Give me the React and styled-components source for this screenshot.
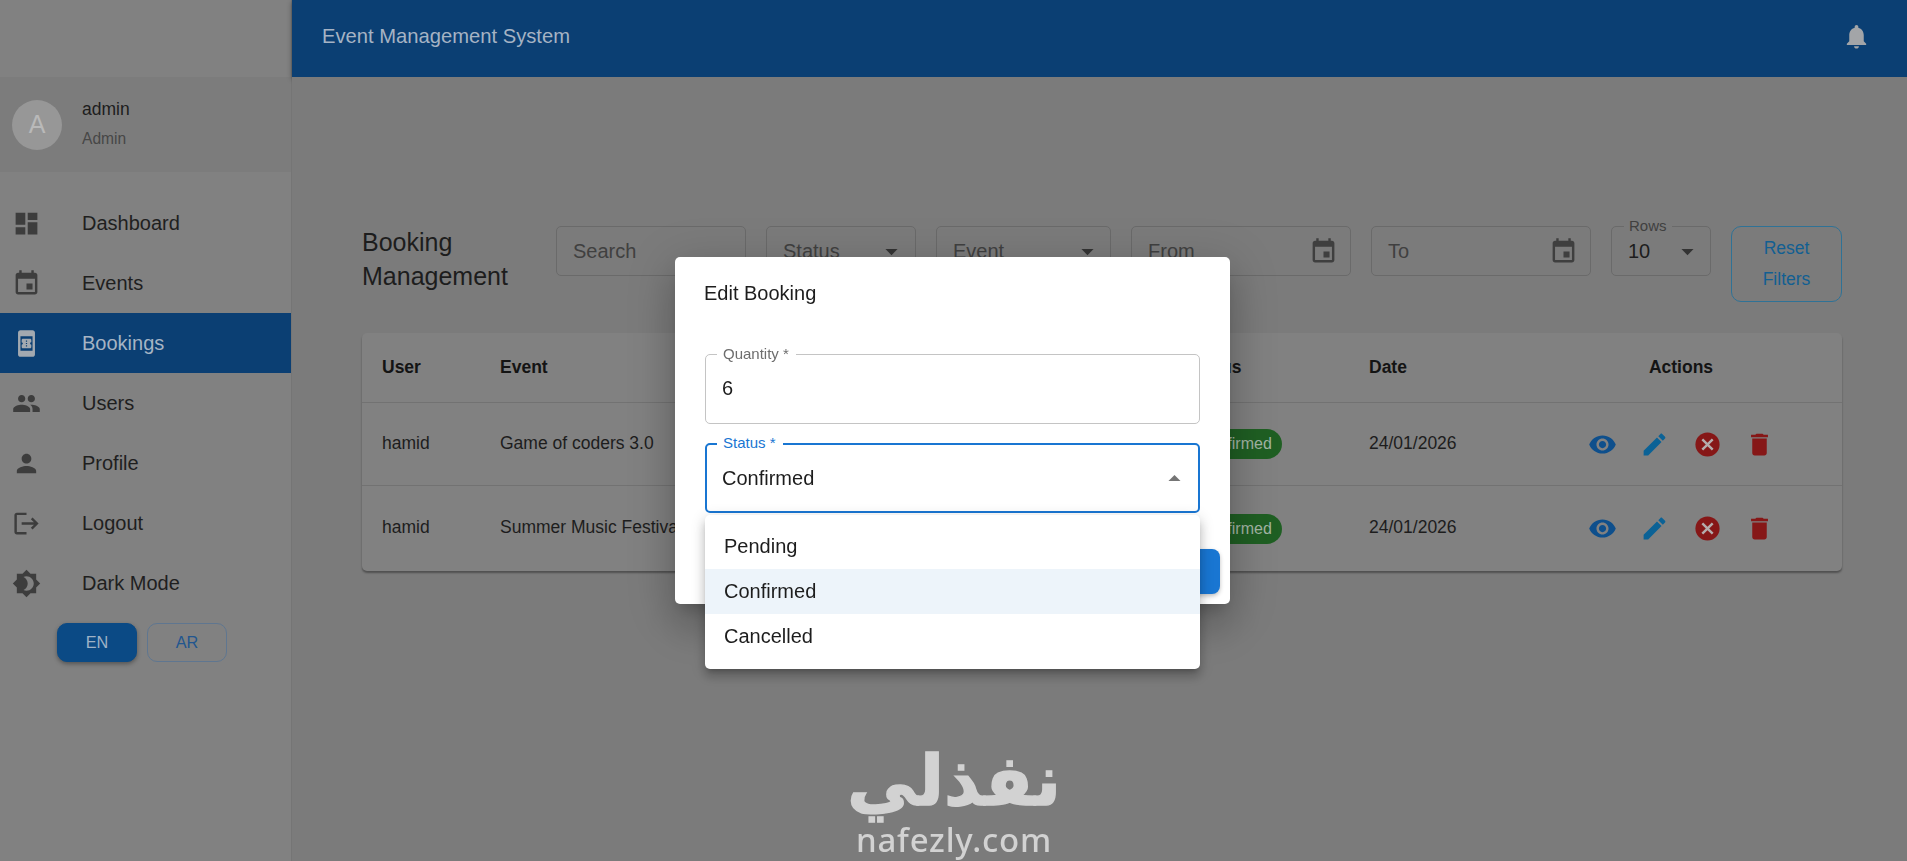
import React from "react";
import styled, { createGlobalStyle } from "styled-components";

const P = {
  dashboard: "M3 13h8V3H3zm0 8h8v-6H3zm10 0h8V11h-8zm0-18v6h8V3z",
  event: "M17 12h-5v5h5v-5zM16 1v2H8V1H6v2H5c-1.11 0-1.99.9-1.99 2L3 19c0 1.1.89 2 2 2h14c1.1 0 2-.9 2-2V5c0-1.1-.9-2-2-2h-1V1h-2zm3 18H5V8h14v11z",
  book: "M17 1.01 7 1c-1.1 0-2 .9-2 2v18c0 1.1.9 2 2 2h10c1.1 0 2-.9 2-2V3c0-1.1-.9-1.99-2-1.99zM17 18H7V6h10v12zm-1-7V9.14C16 8.51 15.55 8 15 8H9c-.55 0-1 .51-1 1.14v1.96c.55 0 1 .45 1 1s-.45 1-1 1v1.76C8 15.49 8.45 16 9 16h6c.55 0 1-.51 1-1.14V13c-.55 0-1-.45-1-1s.45-1 1-1zm-3.5 3.5h-1v-1h1v1zm0-2h-1v-1h1v1zm0-2h-1v-1h1v1z",
  people: "M16 11c1.66 0 2.99-1.34 2.99-3S17.66 5 16 5c-1.66 0-3 1.34-3 3s1.34 3 3 3zm-8 0c1.66 0 2.99-1.34 2.99-3S9.66 5 8 5C6.34 5 5 6.34 5 8s1.34 3 3 3zm0 2c-2.33 0-7 1.17-7 3.5V19h14v-2.5c0-2.33-4.67-3.5-7-3.5zm8 0c-.29 0-.62.02-.97.05 1.16.84 1.97 1.97 1.97 3.45V19h6v-2.5c0-2.33-4.67-3.5-7-3.5z",
  person: "M12 12c2.21 0 4-1.79 4-4s-1.79-4-4-4-4 1.79-4 4 1.79 4 4 4zm0 2c-2.67 0-8 1.34-8 4v2h16v-2c0-2.66-5.33-4-8-4z",
  logout: "M17 7l-1.41 1.41L18.17 11H8v2h10.17l-2.58 2.58L17 17l5-5zM4 5h8V3H4c-1.1 0-2 .9-2 2v14c0 1.1.9 2 2 2h8v-2H4V5z",
  dark: "M20 8.69V4h-4.69L12 .69 8.69 4H4v4.69L.69 12 4 15.31V20h4.69L12 23.31 15.31 20H20v-4.69L23.31 12 20 8.69zM12 18c-.89 0-1.74-.2-2.5-.55C11.56 16.5 13 14.42 13 12s-1.44-4.5-3.5-5.45C10.26 6.2 11.11 6 12 6c3.31 0 6 2.69 6 6s-2.69 6-6 6z",
  bell: "M12 22c1.1 0 2-.9 2-2h-4c0 1.1.89 2 2 2zm6-6v-5c0-3.07-1.64-5.64-4.5-6.32V4c0-.83-.67-1.5-1.5-1.5s-1.5.67-1.5 1.5v.68C7.63 5.36 6 7.92 6 11v5l-2 2v1h16v-1l-2-2z",
  eye: "M12 4.5C7 4.5 2.73 7.61 1 12c1.73 4.39 6 7.5 11 7.5s9.27-3.11 11-7.5c-1.73-4.39-6-7.5-11-7.5zM12 17c-2.76 0-5-2.24-5-5s2.24-5 5-5 5 2.24 5 5-2.24 5-5 5zm0-8c-1.66 0-3 1.34-3 3s1.34 3 3 3 3-1.34 3-3-1.34-3-3-3z",
  edit: "M3 17.25V21h3.75L17.81 9.94l-3.75-3.75L3 17.25zM20.71 7.04c.39-.39.39-1.02 0-1.41l-2.34-2.34c-.39-.39-1.02-.39-1.41 0l-1.83 1.83 3.75 3.75 1.83-1.83z",
  del: "M6 19c0 1.1.9 2 2 2h8c1.1 0 2-.9 2-2V7H6v12zM19 4h-3.5l-1-1h-5l-1 1H5v2h14V4z",
  down: "M7 10l5 5 5-5z",
  up: "M7 14l5-5 5 5z",
};

const Global = createGlobalStyle`
  html, body { margin: 0; padding: 0; height: 100%; overflow: hidden; }
  body { font-family: "Liberation Sans", Arial, sans-serif; background: #7b7b7b; color: #1d1d1d; }
  * { box-sizing: border-box; }
`;

const Svg = styled.svg`
  width: ${(p) => p.$size || 29}px;
  height: ${(p) => p.$size || 29}px;
  fill: ${(p) => p.$color || "currentColor"};
  flex: none;
  display: block;
`;
const Icon = ({ d, size, color }) => (
  <Svg viewBox="0 0 24 24" $size={size} $color={color}>
    <path d={d} />
  </Svg>
);
const CancelGlyph = ({ color }) => (
  <Svg viewBox="0 0 24 24" $size={29} $color={color}>
    <circle cx="12" cy="12" r="10" />
    <path d="M17 15.59 15.59 17 12 13.41 8.41 17 7 15.59 10.59 12 7 8.41 8.41 7 12 10.59 15.59 7 17 8.41 13.41 12z" fill="#b4acac" />
  </Svg>
);

const Shell = styled.div`
  display: flex;
  width: 100%;
  height: 100vh;
  overflow: hidden;
`;
const Sidebar = styled.aside`
  width: 292px;
  flex: none;
  padding-top: 77px;
  background: #818181;
  border-right: 1px solid #757575;
`;
const UserBlock = styled.div`
  display: flex;
  align-items: center;
  gap: 20px;
  height: 95px;
  padding-left: 12px;
  background: #7c7c7c;
`;
const Avatar = styled.div`
  width: 50px;
  height: 50px;
  border-radius: 50%;
  background: #979797;
  color: #b9b9b9;
  font-size: 25px;
  display: flex;
  align-items: center;
  justify-content: center;
`;
const UserText = styled.div`
  display: flex;
  flex-direction: column;
  gap: 4px;
`;
const UserName = styled.div`
  font-size: 17.5px;
  line-height: 26px;
  margin-top: -2px;
  color: #1d1d1d;
`;
const UserRole = styled.div`
  font-size: 15.6px;
  line-height: 26px;
  color: #474747;
`;
const Nav = styled.nav`
  padding-top: 21px;
`;
const NavItem = styled.div`
  display: flex;
  align-items: center;
  gap: 41px;
  height: 60px;
  padding-left: 12px;
  font-size: 20px;
  color: ${(p) => (p.$active ? "#a6b4c4" : "#1f1f1f")};
  background: ${(p) => (p.$active ? "#0b3f73" : "transparent")};
  svg { fill: ${(p) => (p.$active ? "#a3a9b0" : "#3d3d3d")}; }
`;
const LangRow = styled.div`
  display: flex;
  gap: 10px;
  margin: 10px 0 0 57px;
`;
const LangButton = styled.div`
  width: 80px;
  height: 39px;
  border-radius: 10px;
  display: flex;
  align-items: center;
  justify-content: center;
  font-size: 16.25px;
  color: ${(p) => (p.$active ? "#9fb2c6" : "#22568f")};
  background: ${(p) => (p.$active ? "#0b4a85" : "transparent")};
  border: 1px solid ${(p) => (p.$active ? "#0b4a85" : "#5f7690")};
  box-shadow: ${(p) => (p.$active ? "0 2px 4px rgba(0,0,0,.35)" : "none")};
`;

const Column = styled.div`
  flex: 1;
  min-width: 0;
  display: flex;
  flex-direction: column;
`;
const AppBar = styled.header`
  height: 77px;
  flex: none;
  display: flex;
  align-items: center;
  justify-content: space-between;
  padding: 0 36px 5px 30px;
  background: #0b3f73;
  color: #a5b3c4;
  font-size: 20.2px;
  box-shadow: 0 2px 5px rgba(0,0,0,.4);
`;
const Main = styled.main`
  flex: 1;
  padding: 149px 65px 0 70px;
  background: #7b7b7b;
`;
const FilterBar = styled.div`
  display: flex;
  align-items: flex-start;
  gap: 20px;
`;
const PageTitle = styled.h1`
  width: 174px;
  margin: -1px 0 0;
  font-weight: 400;
  font-size: 25px;
  line-height: 34px;
  color: #1d1d1d;
`;
const Field = styled.div`
  position: relative;
  width: ${(p) => p.$w}px;
  height: 50px;
  flex: none;
  display: flex;
  align-items: center;
  justify-content: space-between;
  padding: 0 ${(p) => p.$pr || 18}px 0 16px;
  font-size: 20px;
  color: #404040;
  border: 1px solid #6a6a6a;
  border-radius: 5px;
`;
const Value = styled.span`
  color: #1d1d1d;
`;
const Legend = styled.span`
  position: absolute;
  top: -10px;
  left: 12px;
  padding: 0 5px;
  font-size: 15px;
  line-height: 18px;
  color: #404040;
  background: #7b7b7b;
`;
const ResetButton = styled.div`
  width: 111px;
  height: 76px;
  flex: none;
  display: flex;
  flex-direction: column;
  align-items: center;
  justify-content: center;
  font-size: 17.5px;
  line-height: 31px;
  color: #125f92;
  border: 1px solid #2f7296;
  border-radius: 10px;
`;
const Card = styled.section`
  margin-top: 31px;
  background: #818181;
  border-radius: 5px;
  box-shadow: 0 2px 2px rgba(0,0,0,.35);
  overflow: hidden;
`;
const Row = styled.div`
  display: grid;
  grid-template-columns: 118px 1fr 181px 171px 282px;
  align-items: center;
  height: ${(p) => p.$h}px;
  padding: 0 20px;
  font-size: 17.5px;
  font-weight: ${(p) => (p.$head ? 700 : 400)};
  color: ${(p) => (p.$head ? "#141414" : "#1d1d1d")};
  border-bottom: ${(p) => (p.$last ? "none" : "1px solid #727272")};
`;
const Cell = styled.div`
  margin-bottom: 2px;
`;
const ActionHead = styled.div`
  text-align: center;
`;
const Chip = styled.span`
  display: inline-flex;
  align-items: center;
  height: 30px;
  padding: 0 10px;
  border-radius: 15px;
  font-size: 16px;
  color: #a3b5a4;
  background: #1f5f23;
  justify-self: start;
`;
const Actions = styled.div`
  display: flex;
  justify-content: center;
  gap: 23.5px;
`;

const Overlay = styled.div`
  position: fixed;
  inset: 0;
  padding-right: 2px;
  display: flex;
  align-items: center;
  justify-content: center;
`;
const Dialog = styled.div`
  position: relative;
  width: 555px;
  height: 347px;
  padding: 20px 30px 10px;
  background: #fff;
  border-radius: 5px;
  box-shadow: 0 11px 15px -7px rgba(0,0,0,.2), 0 24px 38px 3px rgba(0,0,0,.14), 0 9px 46px 8px rgba(0,0,0,.12);
`;
const DialogTitle = styled.div`
  font-size: 20px;
  line-height: 32px;
  color: #1d1d1d;
  margin: 0 0 45px -1px;
`;
const FormField = styled.div`
  position: relative;
  height: 70px;
  display: flex;
  align-items: center;
  justify-content: space-between;
  padding: 0 9px ${(p) => (p.$focus ? 0 : 2)}px ${(p) => (p.$focus ? 15 : 16)}px;
  font-size: 20px;
  color: #1d1d1d;
  border: ${(p) => (p.$focus ? "2px solid #1976d2" : "1px solid #c4c4c4")};
  border-radius: 5px;
  margin-bottom: ${(p) => p.$mb || 0}px;
`;
const FormLegend = styled.span`
  position: absolute;
  top: ${(p) => (p.$focus ? -11 : -10)}px;
  left: ${(p) => (p.$focus ? 10 : 11)}px;
  padding: 0 7px 0 6px;
  font-size: 15px;
  line-height: 18px;
  background: #fff;
  color: ${(p) => (p.$focus ? "#1976d2" : "#6d6d6d")};
`;
const DialogActions = styled.div`
  display: flex;
  justify-content: flex-end;
  gap: 10px;
  margin: 36px -20px 0 0;
`;
const SaveButton = styled.div`
  width: 90px;
  height: 45px;
  display: flex;
  align-items: center;
  justify-content: center;
  background: #1976d2;
  color: #fff;
  font-size: 17.5px;
  border-radius: 8px;
  box-shadow: 0 2px 4px rgba(0,0,0,.25);
`;
const Menu = styled.ul`
  position: absolute;
  top: 70px;
  left: -2px;
  right: -2px;
  z-index: 2;
  margin: 0;
  padding: 9px 0 10px;
  list-style: none;
  background: #fff;
  border-radius: 5px;
  box-shadow: 0 5px 5px -3px rgba(0,0,0,.2), 0 8px 10px 1px rgba(0,0,0,.14), 0 3px 14px 2px rgba(0,0,0,.12);
`;
const MenuItem = styled.li`
  height: 45px;
  display: flex;
  align-items: center;
  padding-left: 19px;
  font-size: 20px;
  color: #1d1d1d;
  background: ${(p) => (p.$selected ? "#edf4fa" : "transparent")};
`;

const Watermark = styled.div`
  position: fixed;
  left: 848px;
  top: 750px;
  width: 212px;
  display: flex;
  flex-direction: column;
  align-items: center;
  color: #d2d2d2;
`;
const WatermarkAr = styled.div`
  font-family: "DejaVu Sans", sans-serif;
  font-weight: 700;
  font-size: 70px;
  line-height: 62px;
  white-space: nowrap;
  -webkit-text-stroke: 1.5px #d2d2d2;
`;
const WatermarkEn = styled.div`
  font-family: "Noto Sans", sans-serif;
  font-weight: 500;
  font-size: 33px;
  line-height: 36px;
  letter-spacing: 0.8px;
  margin-top: 10px;
  white-space: nowrap;
`;

const navItems = [
  ["dashboard", "Dashboard"],
  ["event", "Events"],
  ["book", "Bookings", true],
  ["people", "Users"],
  ["person", "Profile"],
  ["logout", "Logout"],
  ["dark", "Dark Mode"],
];
const bookings = [
  ["hamid", "Game of coders 3.0", "24/01/2026"],
  ["hamid", "Summer Music Festival", "24/01/2026"],
];

export default function App() {
  return (
    <>
      <Global />
      <Shell>
        <Sidebar>
          <UserBlock>
            <Avatar>A</Avatar>
            <UserText>
              <UserName>admin</UserName>
              <UserRole>Admin</UserRole>
            </UserText>
          </UserBlock>
          <Nav>
            {navItems.map(([icon, label, active]) => (
              <NavItem key={label} $active={active}>
                <Icon d={P[icon]} />
                {label}
              </NavItem>
            ))}
          </Nav>
          <LangRow>
            <LangButton $active>EN</LangButton>
            <LangButton>AR</LangButton>
          </LangRow>
        </Sidebar>
        <Column>
          <AppBar>
            Event Management System
            <Icon d={P.bell} color="#a3a5a8" />
          </AppBar>
          <Main>
            <FilterBar>
              <PageTitle>Booking Management</PageTitle>
              <Field $w={190}>Search</Field>
              <Field $w={150} $pr={9}>Status<Icon d={P.down} color="#333" /></Field>
              <Field $w={175} $pr={8}>Event<Icon d={P.down} color="#333" /></Field>
              <Field $w={220} $pr={12}>From<Icon d={P.event} color="#3f3f3f" /></Field>
              <Field $w={220} $pr={12}>To<Icon d={P.event} color="#3f3f3f" /></Field>
              <Field $w={100} $pr={8}>
                <Legend>Rows</Legend>
                <Value>10</Value>
                <Icon d={P.down} color="#333" />
              </Field>
              <ResetButton>
                <span>Reset</span>
                <span>Filters</span>
              </ResetButton>
            </FilterBar>
            <Card>
              <Row $head $h={70}>
                <div>User</div>
                <div>Event</div>
                <div>Status</div>
                <div>Date</div>
                <ActionHead>Actions</ActionHead>
              </Row>
              {bookings.map(([user, event, date], i) => (
                <Row key={event} $h={i ? 85 : 83} $last={i === 1}>
                  <Cell>{user}</Cell>
                  <Cell>{event}</Cell>
                  <Chip>Confirmed</Chip>
                  <Cell>{date}</Cell>
                  <Actions>
                    <Icon d={P.eye} color="#0e4f8c" />
                    <Icon d={P.edit} color="#0b6296" />
                    <CancelGlyph color="#861717" />
                    <Icon d={P.del} color="#861717" />
                  </Actions>
                </Row>
              ))}
            </Card>
          </Main>
        </Column>
      </Shell>
      <Overlay>
        <Dialog>
          <DialogTitle>Edit Booking</DialogTitle>
          <FormField $mb={19}>
            <FormLegend>Quantity *</FormLegend>
            6
          </FormField>
          <FormField $focus>
            <FormLegend $focus>Status *</FormLegend>
            Confirmed
            <Icon d={P.up} color="#757575" />
            <Menu>
              <MenuItem>Pending</MenuItem>
              <MenuItem $selected>Confirmed</MenuItem>
              <MenuItem>Cancelled</MenuItem>
            </Menu>
          </FormField>
          <DialogActions>
            <SaveButton>Save</SaveButton>
          </DialogActions>
        </Dialog>
      </Overlay>
      <Watermark>
        <WatermarkAr>نفذلي</WatermarkAr>
        <WatermarkEn>nafezly.com</WatermarkEn>
      </Watermark>
    </>
  );
}
